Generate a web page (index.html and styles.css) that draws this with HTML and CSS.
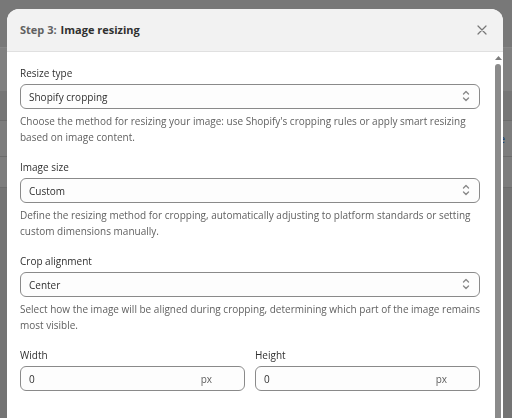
FILE: index.html
```html
<!DOCTYPE html>
<html lang="en">
<head>
    <meta charset="UTF-8">
    <meta name="viewport" content="width=device-width, initial-scale=1.0">
    <title>Image resizing</title>
    <link rel="stylesheet" href="styles.css">
</head>
<body>

<!-- Dimmed page behind the modal -->
<div class="page">
    <div class="page-top"></div>
    <div class="page-band"></div>
    <div class="page-row page-row-head"></div>
    <div class="page-row page-row-item"><a href="#">e</a></div>
    <div class="page-row page-row-foot"></div>
</div>

<div class="overlay">
    <div class="modal" role="dialog" aria-labelledby="modalTitle">
        <header class="modal-header">
            <h1 id="modalTitle"><span class="step">Step 3:</span> Image resizing</h1>
            <button class="close-button" type="button" aria-label="Close">
                <svg width="10" height="10" viewBox="0 0 10 10" fill="none" stroke="#777" stroke-width="1.2" stroke-linecap="round">
                    <path d="M1 1L9 9M9 1L1 9"/>
                </svg>
            </button>
        </header>

        <div class="modal-body">
            <form class="form">
                <div class="field">
                    <label for="resizeType">Resize type</label>
                    <div class="select-wrap">
                        <select id="resizeType">
                            <option>Shopify cropping</option>
                        </select>
                        <svg class="select-icon" width="8" height="12" viewBox="0 0 8 12">
                            <path d="M1.5 4L4 1.5L6.5 4M1.5 8L4 10.5L6.5 8"/>
                        </svg>
                    </div>
                    <p class="help">Choose the method for resizing your image: use Shopify's cropping rules or apply smart resizing based on image content.</p>
                </div>

                <div class="field">
                    <label for="imageSize">Image size</label>
                    <div class="select-wrap">
                        <select id="imageSize">
                            <option>Custom</option>
                        </select>
                        <svg class="select-icon" width="8" height="12" viewBox="0 0 8 12">
                            <path d="M1.5 4L4 1.5L6.5 4M1.5 8L4 10.5L6.5 8"/>
                        </svg>
                    </div>
                    <p class="help">Define the resizing method for cropping, automatically adjusting to platform standards or setting custom dimensions manually.</p>
                </div>

                <div class="field">
                    <label for="cropAlignment">Crop alignment</label>
                    <div class="select-wrap">
                        <select id="cropAlignment">
                            <option>Center</option>
                        </select>
                        <svg class="select-icon" width="8" height="12" viewBox="0 0 8 12">
                            <path d="M1.5 4L4 1.5L6.5 4M1.5 8L4 10.5L6.5 8"/>
                        </svg>
                    </div>
                    <p class="help">Select how the image will be aligned during cropping, determining which part of the image remains most visible.</p>
                </div>

                <div class="size-fields">
                    <div class="field">
                        <label for="width">Width</label>
                        <div class="input-box">
                            <input type="text" id="width" value="0" inputmode="numeric">
                            <span class="unit">px</span>
                        </div>
                    </div>
                    <div class="field">
                        <label for="height">Height</label>
                        <div class="input-box">
                            <input type="text" id="height" value="0" inputmode="numeric">
                            <span class="unit">px</span>
                        </div>
                    </div>
                </div>
            </form>

            <div class="scrollbar" aria-hidden="true">
                <svg width="7" height="4" viewBox="0 0 7 4" fill="#7d7d7d">
                    <path d="M3.5 0L7 4H0Z"/>
                </svg>
                <div class="scroll-thumb"></div>
            </div>
        </div>
    </div>
</div>

</body>
</html>
```
FILE: styles.css
```css
* {
    box-sizing: border-box;
}

body {
    margin: 0;
    height: 100vh;
    overflow: hidden;
    background-color: #747474;
    color: #303030;
    font-family: "Open Sans", "Noto Sans", sans-serif;
    font-size: 10px;
    line-height: 16px;
}

.page-top {
    height: 47px;
    background-color: #787878;
}

.page-band {
    height: 44px;
    background-color: #808080;
    border-top: 1px solid #868686;
}

.page-row {
    display: flex;
    align-items: center;
    justify-content: flex-end;
    padding-right: 7px;
    background-color: #7d7d7d;
    border-bottom: 1px solid #6c6c6c;
}

.page-row-head {
    height: 30px;
    background-color: #767676;
}

.page-row-item {
    height: 36px;
}

.page-row-foot {
    height: 31px;
}

.page-row a {
    color: #1d3f70;
    font-weight: 600;
    text-decoration: none;
}

.overlay {
    position: fixed;
    inset: 0;
    padding: 9px 9px 0 7px;
}

.modal {
    display: flex;
    flex-direction: column;
    height: 100%;
    background-color: #fff;
    border-radius: 12px 12px 0 0;
    overflow: hidden;
}

.modal-header {
    display: flex;
    align-items: center;
    justify-content: space-between;
    padding: 13px;
    background-color: #f2f2f2;
    border-bottom: 1px solid #e0e0e0;
}

h1 {
    display: flex;
    gap: 4px;
    margin: 0;
    font-size: 11px;
    line-height: 16px;
    font-weight: 700;
}

.step {
    color: #616161;
}

.close-button {
    display: flex;
    padding: 3px;
    border: none;
    background: none;
    cursor: pointer;
}

.modal-body {
    display: flex;
    flex: 1;
    min-height: 0;
}

.form {
    display: flex;
    flex: 1;
    flex-direction: column;
    gap: 14px;
    padding: 13px 15px 0 13px;
}

.field {
    display: flex;
    flex-direction: column;
}

.select-wrap {
    position: relative;
    margin-top: 3px;
}

select {
    display: block;
    appearance: none;
    width: 100%;
    height: 25px;
    padding: 0 24px 0 8px;
    border: 1px solid #8a8a8a;
    border-radius: 6px;
    background-color: #fdfdfd;
    color: #303030;
    font: inherit;
}

.select-icon {
    position: absolute;
    top: 6px;
    right: 10px;
    fill: none;
    stroke: #8a8a8a;
    stroke-width: 1.4;
    stroke-linecap: round;
    stroke-linejoin: round;
    pointer-events: none;
}

.help {
    margin: 4px 0 0;
    color: #616161;
}

.size-fields {
    display: grid;
    grid-template-columns: 1fr 1fr;
    gap: 10px;
}

.input-box {
    display: flex;
    align-items: center;
    height: 25px;
    margin-top: 3px;
    padding: 0 32px 0 8px;
    border: 1px solid #8a8a8a;
    border-radius: 6px;
    background-color: #fdfdfd;
}

.input-box input {
    flex: 1;
    min-width: 0;
    padding: 0;
    border: none;
    outline: none;
    background: none;
    color: #303030;
    font: inherit;
}

.unit {
    color: #616161;
}

.scrollbar {
    display: flex;
    flex-direction: column;
    gap: 4px;
    width: 8px;
    padding-top: 4px;
}

.scroll-thumb {
    flex: 1;
    width: 6px;
    background-color: #8b8b8b;
    border-radius: 3px 3px 0 0;
}
```
